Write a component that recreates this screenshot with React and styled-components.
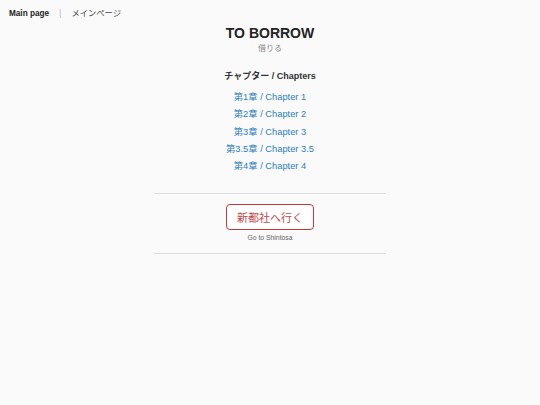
import React from "react";
import styled, { createGlobalStyle } from "styled-components";

const Global = createGlobalStyle`
  html, body { margin: 0; padding: 0; background: #fafafa; }
  body { font-family: "Liberation Sans", Arial, "Noto Sans CJK JP", sans-serif; color: #222; }
  a { text-decoration: none; }
`;

const Nav = styled.nav`
  display: flex;
  align-items: baseline;
  gap: 10px;
  padding: 8px 9px 0;
  height: 12px;
  line-height: 10px;
`;
const NavMain = styled.a`
  font-weight: bold;
  font-size: 8.2px;
  color: #222;
`;
const Sep = styled.span`
  color: #bbb;
  font-size: 9px;
`;
const NavJp = styled.a`
  color: #444;
  font-size: 8.3px;
`;

const Main = styled.main`
  width: 232px;
  margin: 0 auto;
  display: flex;
  flex-direction: column;
  align-items: center;
`;
const Title = styled.h1`
  margin: 5px 0 0;
  font-size: 14px;
  line-height: 17px;
  font-weight: bold;
  color: #222;
`;
const Sub = styled.div`
  margin-top: 2px;
  font-size: 8px;
  color: #888;
  line-height: 10px;
`;
const Heading = styled.h2`
  margin: 17px 0 0;
  font-size: 9px;
  line-height: 11px;
  font-weight: bold;
  color: #333;
`;
const List = styled.ul`
  list-style: none;
  margin: 7px 0 0;
  padding: 0;
  display: flex;
  flex-direction: column;
  align-items: center;
`;
const Item = styled.li`
  line-height: 17.3px;
  font-size: 9.3px;
`;
const ChapterLink = styled.a`
  color: #2a7fc1;
`;
const Divider = styled.hr`
  width: 100%;
  border: none;
  border-top: 1px solid #dedede;
  margin: ${p => p.$top}px 0 0;
`;
const Button = styled.a`
  margin-top: 10px;
  width: 86px;
  height: 24px;
  border: 1px solid #c0393b;
  border-radius: 4px;
  display: flex;
  align-items: center;
  justify-content: center;
  color: #c7474a;
  font-size: 11px;
  background: #fff;
`;
const Caption = styled.div`
  margin-top: 4px;
  font-size: 6.8px;
  color: #666;
  line-height: 8px;
`;

const chapters = [
  ["第1章", "Chapter 1"],
  ["第2章", "Chapter 2"],
  ["第3章", "Chapter 3"],
  ["第3.5章", "Chapter 3.5"],
  ["第4章", "Chapter 4"],
];

export default function App() {
  return (
    <>
      <Global />
      <Nav>
        <NavMain href="#">Main page</NavMain>
        <Sep>|</Sep>
        <NavJp href="#">メインページ</NavJp>
      </Nav>
      <Main>
        <Title>TO BORROW</Title>
        <Sub>借りる</Sub>
        <Heading>チャプター / Chapters</Heading>
        <List>
          {chapters.map(([jp, en]) => (
            <Item key={en}>
              <ChapterLink href="#">{jp} / {en}</ChapterLink>
            </Item>
          ))}
        </List>
        <Divider $top={18} />
        <Button href="#">新都社へ行く</Button>
        <Caption>Go to Shintosa</Caption>
        <Divider $top={11} />
      </Main>
    </>
  );
}
